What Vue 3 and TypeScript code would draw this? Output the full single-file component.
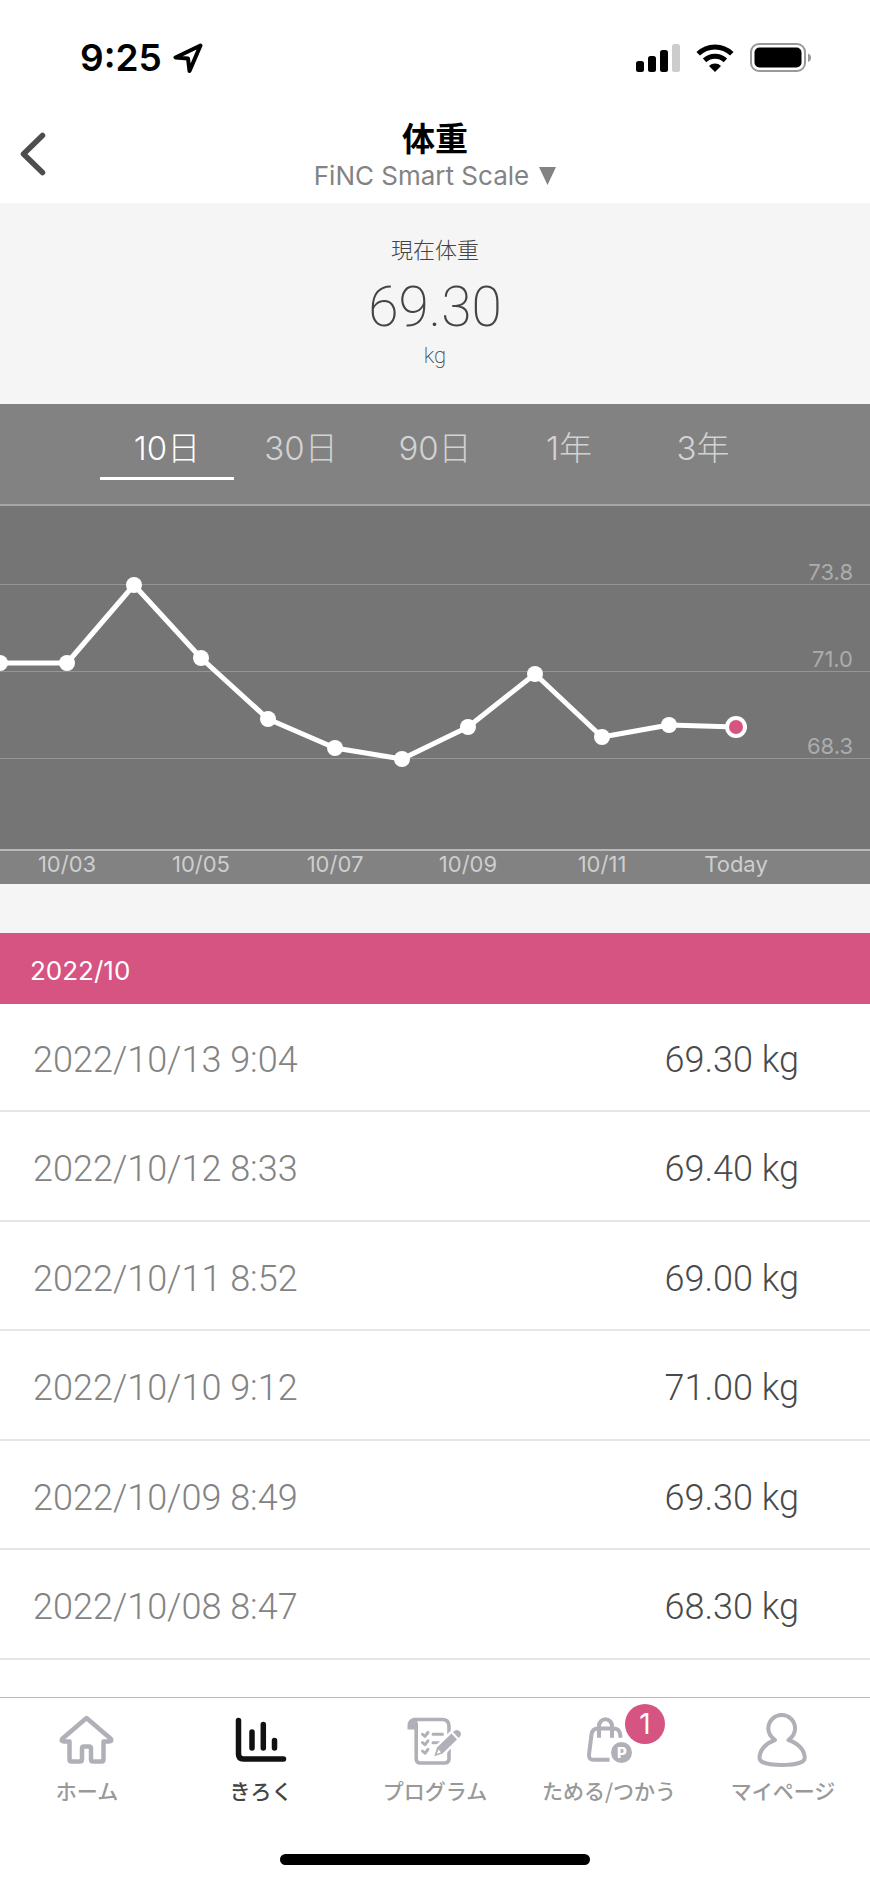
<script setup lang="ts">
import { computed, ref } from 'vue'

interface Point { date: string; weight: number; label?: string }
interface Entry { date: string; weight: string }

const ranges = ['10日', '30日', '90日', '1年', '3年']
const selectedRange = ref(0)

const points: Point[] = [
  { date: '10/02', weight: 71.34 },
  { date: '10/03', weight: 71.34, label: '10/03' },
  { date: '10/04', weight: 73.8 },
  { date: '10/05', weight: 71.48, label: '10/05' },
  { date: '10/06', weight: 69.57 },
  { date: '10/07', weight: 68.65, label: '10/07' },
  { date: '10/08', weight: 68.3 },
  { date: '10/09', weight: 69.3, label: '10/09' },
  { date: '10/10', weight: 71.0 },
  { date: '10/11', weight: 69.0, label: '10/11' },
  { date: '10/12', weight: 69.37 },
  { date: '10/13', weight: 69.3, label: 'Today' },
]

const CHART_WIDTH = 870
const gridLines = [
  { y: 81, label: '73.8' },
  { y: 168, label: '71.0' },
  { y: 255, label: '68.3' },
]

const plotted = computed(() =>
  points.map((p, i) => ({
    ...p,
    x: Math.round((i * CHART_WIDTH) / 13),
    y: Math.round(255 - ((p.weight - 68.3) * 174) / 5.5),
  })),
)
const line = computed(() => plotted.value.map((p) => `${p.x},${p.y}`).join(' '))
const latest = computed(() => plotted.value[plotted.value.length - 1])

const entries: Entry[] = [
  { date: '2022/10/13 9:04', weight: '69.30 kg' },
  { date: '2022/10/12 8:33', weight: '69.40 kg' },
  { date: '2022/10/11 8:52', weight: '69.00 kg' },
  { date: '2022/10/10 9:12', weight: '71.00 kg' },
  { date: '2022/10/09 8:49', weight: '69.30 kg' },
  { date: '2022/10/08 8:47', weight: '68.30 kg' },
]
</script>

<template>
  <div class="app">
    <div class="status">
      <div class="status-left">
        <span class="time">9:25</span>
        <svg class="location" viewBox="0 0 30 30" aria-hidden="true">
          <path d="M27.500 2.500 L2.500 14.500 L15 15.500 L16.500 28 Z" fill="none" stroke="#000" stroke-width="4" stroke-linejoin="round" />
        </svg>
      </div>
      <div class="status-right">
        <svg width="44" height="30" viewBox="0 0 44 30" aria-hidden="true">
          <rect x="0" y="18" width="8" height="11" rx="2.5" />
          <rect x="12" y="13" width="8" height="16" rx="2.5" />
          <rect x="24" y="7" width="8" height="22" rx="2.5" />
          <rect x="36" y="1" width="8" height="28" rx="2.5" fill="#ccc" />
        </svg>
        <svg width="38" height="30" viewBox="0 0 38 30" aria-hidden="true">
          <g fill="none" stroke="#000" stroke-width="5">
            <path d="M2.2 10.8 A24 24 0 0 1 35.8 10.8" />
            <path d="M8.6 17.4 A15 15 0 0 1 29.4 17.4" />
          </g>
          <path d="M19 29 L13 23 A8.5 8.5 0 0 1 25 23 Z" />
        </svg>
        <svg width="62" height="30" viewBox="0 0 62 30" aria-hidden="true">
          <rect x="1" y="1" width="54" height="27" rx="8" fill="none" stroke="#999" stroke-width="2" />
          <rect x="4.500" y="4.500" width="47" height="20" rx="5" />
          <path d="M58 10.500 A4.500 4.500 0 0 1 58 19 Z" fill="#999" />
        </svg>
      </div>
    </div>

    <header class="navbar">
      <button class="back" type="button" aria-label="戻る">
        <svg width="30" height="46" viewBox="0 0 30 46" aria-hidden="true">
          <path d="M24.500 4.500 L5.500 23 L24.500 41.500" fill="none" stroke="#4d4d4d" stroke-width="5.500" stroke-linecap="round" stroke-linejoin="round" />
        </svg>
      </button>
      <div class="heading">
        <h1>体重</h1>
        <button class="device" type="button">
          FiNC Smart Scale
          <svg width="17" height="18" viewBox="0 0 17 18" aria-hidden="true"><path d="M0 0 H17 L8.500 18 Z" fill="#838383" /></svg>
        </button>
      </div>
    </header>

    <section class="summary">
      <h2>現在体重</h2>
      <p class="current">69.30</p>
      <p class="unit">kg</p>
    </section>

    <section class="trend">
      <div class="ranges">
        <button
          v-for="(range, i) in ranges"
          :key="range"
          type="button"
          class="range"
          :class="{ active: i === selectedRange }"
          :aria-pressed="i === selectedRange"
          @click="selectedRange = i"
        >{{ range }}</button>
      </div>
      <svg class="chart" viewBox="0 0 870 380" role="img" aria-label="体重の推移">
        <rect width="870" height="346" fill="#757575" />
        <rect width="870" height="2" fill="#a5a5a5" />
        <g v-for="g in gridLines" :key="g.label">
          <rect x="0" :y="g.y - 1" width="870" height="1" fill="#959595" />
          <text x="853" :y="g.y - 5" class="y-label">{{ g.label }}</text>
        </g>
        <rect y="345" width="870" height="2" fill="#bababa" />
        <polyline :points="line" fill="none" stroke="#fff" stroke-width="5" stroke-linejoin="round" />
        <circle v-for="p in plotted" :key="p.date" :cx="p.x" :cy="p.y" r="8" fill="#fff" />
        <circle :cx="latest.x" :cy="latest.y" r="11" fill="#fff" />
        <circle :cx="latest.x" :cy="latest.y" r="7" fill="#d65482" />
        <template v-for="p in plotted" :key="p.date">
          <text v-if="p.label" :x="p.x" y="368" class="x-label">{{ p.label }}</text>
        </template>
      </svg>
    </section>

    <section class="history">
      <h2 id="month">2022/10</h2>
      <table aria-labelledby="month">
        <tbody>
          <tr v-for="entry in entries" :key="entry.date">
            <th scope="row">{{ entry.date }}</th>
            <td>{{ entry.weight }}</td>
          </tr>
        </tbody>
      </table>
    </section>

    <nav class="tabbar">
      <div class="tabs">
        <a class="tab" href="#home">
          <svg class="icon" viewBox="0 0 60 60" aria-hidden="true">
            <path d="M29.500 9 L5 30 Q4 32.500 7 32.500 H12.500 V50.500 Q12.500 52.500 14.500 52.500 H23 Q25 52.500 25 50.500 V39.500 Q25 37.500 27 37.500 H32 Q34 37.500 34 39.500 V50.500 Q34 52.500 36 52.500 H44.500 Q46.500 52.500 46.500 50.500 V32.500 H52 Q55 32.500 54 30 Z" fill="none" stroke="currentColor" stroke-width="4.500" stroke-linejoin="round" />
          </svg>
          <span>ホーム</span>
        </a>
        <a class="tab active" href="#record" aria-current="page">
          <svg class="icon" viewBox="0 0 60 60" aria-hidden="true">
            <g fill="none" stroke="currentColor" stroke-width="5.500" stroke-linecap="round">
              <path d="M7.500 11.500 V45 Q7.500 50 12.500 50 H52.500" />
              <path d="M21 23 V39 M32.300 15.500 V39 M43.500 31.500 V39" />
            </g>
          </svg>
          <span>きろく</span>
        </a>
        <a class="tab" href="#program">
          <svg class="icon" viewBox="0 0 60 60" aria-hidden="true">
            <path d="M11.500 20.500 H2.500 V17 Q2.500 9 10 9 H13 Z" fill="currentColor" />
            <path d="M8 10.500 H37 Q44 10.500 44 17 V49.500 Q44 54 39.500 54 H15.500 Q11.200 54 11.200 49.500 V14" fill="none" stroke="currentColor" stroke-width="3.600" />
            <g fill="none" stroke="currentColor" stroke-width="3" stroke-linecap="round" stroke-linejoin="round">
              <path d="M17.500 25.300 L20 27.300 L23 23.500 M17.500 33.700 L20 35.700 L23 31.900 M17.500 42.200 L20 44.200 L23 40.400" />
              <path d="M28 25.300 H37.500 M28 33.700 H36" />
            </g>
            <path d="M48 19.500 L56.500 28 L39 47 L26 51 L30 37 Z" fill="#fff" />
            <path d="M32 38.500 L46.500 24.500 L52 30.500 L37.500 44.500 L29.300 47.300 Z" fill="currentColor" />
            <path d="M48 23 L50 21.500 Q52.500 20 55 22.500 Q57 25 55 27.500 L53.500 29 Z" fill="currentColor" />
            <path d="M33.500 40.500 L31.800 45 L36 43.300 Z" fill="#fff" />
          </svg>
          <span>プログラム</span>
        </a>
        <a class="tab" href="#points">
          <svg class="icon" viewBox="0 0 60 60" aria-hidden="true">
            <g fill="none" stroke="currentColor" stroke-width="4">
              <path d="M30.500 50.800 H14.500 Q9.500 50.800 10 45.500 L12.500 25.500 Q13.300 19.500 19 19.500 H34.500 Q40 19.500 41 24.500 L41.600 28.800" />
              <path d="M20 28.800 V17 A6.500 6.700 0 0 1 33 17 V28.800" />
            </g>
            <circle cx="42.500" cy="43.500" r="10.500" fill="currentColor" />
            <text class="coin" x="43" y="49">P</text>
          </svg>
          <span>ためる/つかう</span>
          <b class="badge">1</b>
        </a>
        <a class="tab" href="#mypage">
          <svg class="icon" viewBox="0 0 60 60" aria-hidden="true">
            <path d="M22 31 C18 28 15.300 24 15.300 19.500 A13.400 13.400 0 0 1 42.100 19.500 C42.100 24 39.500 28 35.500 31 C45 34 51.700 41 51.700 49 C51.700 53.500 42 56 28.700 56 C15.500 56 6.500 53.500 6.500 49 C6.500 41 13 34 22 31 Z" fill="none" stroke="currentColor" stroke-width="4" stroke-linejoin="round" />
          </svg>
          <span>マイページ</span>
        </a>
      </div>
      <div class="home-indicator"></div>
    </nav>
  </div>
</template>

<style>
body {
  margin: 0;
  background: #fff;
}
</style>

<style scoped>
.app {
  display: flex;
  flex-direction: column;
  min-height: 100vh;
  background: #fff;
  color: #444;
  font-family: Inter, "Noto Sans CJK JP", sans-serif;
}
h1, h2, p {
  margin: 0;
  font-weight: 400;
}
button {
  padding: 0;
  border: 0;
  background: none;
  font: inherit;
  color: inherit;
  cursor: pointer;
}
.status {
  display: flex;
  justify-content: space-between;
  align-items: center;
  height: 116px;
  padding: 0 58px 0 80px;
  box-sizing: border-box;
  color: #000;
}
.status-left, .status-right {
  display: flex;
  align-items: center;
}
.status-left {
  gap: 11px;
}
.status-right {
  gap: 16px;
}
.time {
  font-size: 37px;
  line-height: 44px;
  font-weight: 600;
}
.location {
  width: 30px;
  height: 30px;
}
.navbar {
  display: grid;
  grid-template-columns: 64px 1fr 64px;
  height: 87px;
}
.back {
  display: flex;
  align-items: center;
  height: 76px;
  padding-left: 18px;
}
.heading {
  display: flex;
  flex-direction: column;
  align-items: center;
}
h1 {
  padding-top: 2px;
  font-size: 33px;
  line-height: 42px;
  font-weight: 700;
  color: #000;
}
.device {
  display: flex;
  align-items: center;
  gap: 10px;
  font-size: 26px;
  line-height: 32px;
  color: #838383;
}
.summary {
  display: flex;
  flex-direction: column;
  align-items: center;
  padding: 31px 0 32px;
  background: #f5f5f5;
}
.summary h2 {
  font-size: 22px;
  line-height: 32px;
  font-weight: 300;
}
.current {
  margin-top: 9px;
  font-family: Roboto, sans-serif;
  font-weight: 200;
  font-size: 55px;
  line-height: 64px;
}
.unit {
  margin-top: 1px;
  font-family: Roboto, sans-serif;
  font-weight: 200;
  font-size: 22px;
  line-height: 32px;
}
.trend {
  background: #828282;
}
.ranges {
  display: flex;
  height: 100px;
  padding: 0 100px;
}
.range {
  flex: 1;
  height: 76px;
  padding-top: 14px;
  border-bottom: 3px solid transparent;
  box-sizing: border-box;
  font-size: 33px;
  line-height: 44px;
  font-weight: 300;
  color: #d2d2d2;
}
.range.active {
  border-bottom-color: #fff;
  color: #fff;
}
.chart {
  display: block;
  width: 100%;
  height: auto;
}
.y-label, .x-label {
  font-size: 22px;
}
.y-label {
  fill: #acacac;
  text-anchor: end;
}
.x-label {
  fill: #cecece;
  text-anchor: middle;
}
.history {
  border-top: 49px solid #f5f5f5;
}
.history h2 {
  padding: 4px 30px 0;
  background: #d65482;
  color: #fff;
  font-size: 26px;
  line-height: 67px;
}
table {
  width: 100%;
  height: 656px;
  border-collapse: collapse;
  font-family: Roboto, sans-serif;
  font-size: 36px;
  line-height: 44px;
}
tr {
  border-bottom: 2px solid #e6e6e6;
}
th, td {
  padding: 6px 0 0;
  font-weight: 300;
}
th {
  padding-left: 33px;
  text-align: left;
  color: #838383;
}
td {
  padding-right: 71px;
  text-align: right;
  color: #4a4a4a;
}
.tabbar {
  display: flex;
  flex-direction: column;
  justify-content: space-between;
  align-items: center;
  height: 186px;
  margin-top: auto;
  padding-bottom: 18px;
  border-top: 1px solid #bbb;
  box-sizing: border-box;
}
.tabs {
  display: flex;
  width: 100%;
}
.tab {
  position: relative;
  flex: 1;
  display: flex;
  flex-direction: column;
  align-items: center;
  padding-top: 11px;
  color: #b0b0b8;
  text-decoration: none;
}
.tab span {
  margin-top: 5px;
  font-family: "Noto Sans CJK JP", sans-serif;
  font-size: 21px;
  line-height: 32px;
  font-weight: 500;
  color: #999;
}
.tab.active {
  color: #111;
}
.tab.active span {
  color: #444;
}
.icon {
  width: 60px;
  height: 60px;
}
.coin {
  font-family: Inter, sans-serif;
  font-size: 15px;
  font-weight: 800;
  fill: #fff;
  text-anchor: middle;
}
.badge {
  position: absolute;
  top: 6px;
  left: calc(50% + 16px);
  width: 40px;
  height: 40px;
  border-radius: 50%;
  background: #d65482;
  color: #fff;
  font-size: 28px;
  line-height: 40px;
  font-weight: 400;
  text-align: center;
}
.home-indicator {
  width: 310px;
  height: 11px;
  border-radius: 6px;
  background: #000;
}
</style>
